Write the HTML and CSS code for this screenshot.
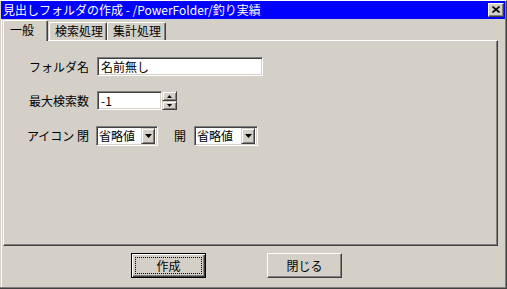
FILE: index.html
```html
<!DOCTYPE html>
<html lang="ja">
<head>
<meta charset="utf-8">
<title>見出しフォルダの作成</title>
<link rel="stylesheet" href="styles.css">
</head>
<body>
<div class="window">
  <div class="titlebar">
    <span class="title">見出しフォルダの作成 - /PowerFolder/釣り実績</span>
    <span class="close"><svg width="8" height="7" viewBox="0 0 8 7"><path d="M0.5 0.5 L7.5 6.5 M7.5 0.5 L0.5 6.5" stroke="#000" stroke-width="1.6" fill="none"/></svg></span>
  </div>
  <div class="tabs">
    <div class="tab active">一般</div>
    <div class="tab">検索処理</div>
    <div class="tab">集計処理</div>
  </div>
  <div class="panel">
    <div class="row row1">
      <span class="lbl">フォルダ名</span>
      <div class="field name">名前無し</div>
    </div>
    <div class="row row2">
      <span class="lbl">最大検索数</span>
      <div class="field num">-1</div>
      <div class="spin">
        <div class="sb up"><svg width="5" height="3" viewBox="0 0 5 3"><path d="M2.5 0 L5 3 L0 3Z" fill="#000"/></svg></div>
        <div class="sb down"><svg width="5" height="3" viewBox="0 0 5 3"><path d="M0 0 L5 0 L2.5 3Z" fill="#000"/></svg></div>
      </div>
    </div>
    <div class="row row3">
      <span class="lbl">アイコン 閉</span>
      <div class="combo c1"><span class="cval">省略値</span><span class="cbtn"><svg width="7" height="4" viewBox="0 0 7 4"><path d="M0 0 L7 0 L3.5 4Z" fill="#000"/></svg></span></div>
      <span class="lbl2">開</span>
      <div class="combo c2"><span class="cval">省略値</span><span class="cbtn"><svg width="7" height="4" viewBox="0 0 7 4"><path d="M0 0 L7 0 L3.5 4Z" fill="#000"/></svg></span></div>
    </div>
  </div>
  <div class="buttons">
    <div class="btn default"><span class="focus">作成</span></div>
    <div class="btn">閉じる</div>
  </div>
</div>
</body>
</html>
```
FILE: styles.css
```css
* { box-sizing: border-box; }
html, body { margin: 0; padding: 0; }
body {
  width: 507px;
  height: 289px;
  overflow: hidden;
  background: #d4d0c8;
  font-family: "Noto Sans CJK JP", "Liberation Sans", sans-serif;
  font-size: 12px;
  color: #000;
}
.window {
  width: 507px;
  height: 289px;
  display: flex;
  flex-direction: column;
  background: #d4d0c8;
  border-top: 1px solid #ffffff;
  border-right: 1px solid #404040;
  border-bottom: 1px solid #404040;
  box-shadow: inset -1px -1px 0 #808080, inset 1px 0 0 #d4d0c8, inset 2px 0 0 #ffffff;
}
.titlebar {
  margin: 0 1px 0 1px;
  height: 18px;
  background: #0000ff;
  display: flex;
  align-items: center;
  justify-content: space-between;
  padding: 0 1px 0 2px;
}
.title {
  color: #fff;
  font-size: 12px;
  line-height: 18px;
  white-space: nowrap;
}
.close {
  width: 16px;
  height: 14px;
  background: #d4d0c8;
  border-top: 1px solid #fff;
  border-left: 1px solid #fff;
  border-right: 1px solid #404040;
  border-bottom: 1px solid #404040;
  box-shadow: inset -1px -1px 0 #808080;
  display: flex;
  align-items: center;
  justify-content: center;
  padding: 0 1px 1px 0;
}
.close svg { display: block; }
.tabs {
  margin: 1px 0 0 3px;
  height: 20px;
  display: flex;
  align-items: flex-end;
}
.tab {
  height: 18px;
  padding: 0 4px 0 5px;
  line-height: 16px;
  background: #d4d0c8;
  border-top: 1px solid #fff;
  border-left: 1px solid #fff;
  border-right: 1px solid #404040;
  box-shadow: inset -1px 0 0 #808080;
  border-top-left-radius: 2px;
  border-top-right-radius: 2px;
  white-space: nowrap;
}
.tab:nth-child(2) { width: 58px; margin-left: 1px; }
.tab:nth-child(3) { width: 59px; margin-left: 0; }
.tab.active {
  width: 45px;
  height: 21px;
  margin-bottom: -1px;
  position: relative;
  z-index: 1;
  padding-left: 6px;
  line-height: 18px;
}
.panel {
  margin: 0 8px 0 3px;
  height: 206px;
  border-top: 1px solid #fff;
  border-left: 1px solid #fff;
  border-right: 1px solid #404040;
  border-bottom: 1px solid #404040;
  box-shadow: inset -1px -1px 0 #808080;
  padding-top: 16px;
}
.row { display: flex; align-items: center; }
.row2 { margin-top: 15px; }
.row3 { margin-top: 16px; }
.lbl {
  width: 85px;
  text-align: right;
  line-height: 16px;
  white-space: nowrap;
}
.field {
  height: 19px;
  background: #fff;
  border-top: 1px solid #808080;
  border-left: 1px solid #808080;
  border-right: 1px solid #fff;
  border-bottom: 1px solid #fff;
  box-shadow: inset 1px 1px 0 #404040, inset -1px -1px 0 #d4d0c8;
  padding-left: 3px;
  line-height: 17px;
  white-space: nowrap;
}
.field.name { margin-left: 8px; width: 166px; }
.field.num { margin-left: 8px; width: 65px; }
.spin {
  width: 15px;
  height: 19px;
  display: flex;
  flex-direction: column;
}
.sb {
  background: #d4d0c8;
  border-top: 1px solid #d4d0c8;
  border-left: 1px solid #d4d0c8;
  border-right: 1px solid #404040;
  border-bottom: 1px solid #404040;
  box-shadow: inset 1px 1px 0 #fff, inset -1px -1px 0 #808080;
  display: flex;
  align-items: center;
  justify-content: center;
}
.sb svg { display: block; }
.sb.up { height: 10px; }
.sb.down { height: 9px; }
.combo {
  height: 20px;
  background: #fff;
  border-top: 1px solid #808080;
  border-left: 1px solid #808080;
  border-right: 1px solid #fff;
  border-bottom: 1px solid #fff;
  box-shadow: inset 1px 1px 0 #404040, inset -1px -1px 0 #d4d0c8;
  display: flex;
  align-items: center;
  justify-content: space-between;
  padding: 2px 2px 2px 2px;
}
.combo.c1 { margin-left: 7px; width: 62px; }
.combo.c2 { margin-left: 8px; width: 64px; }
.cval { line-height: 16px; white-space: nowrap; }
.cbtn {
  width: 14px;
  height: 16px;
  background: #d4d0c8;
  border-top: 1px solid #d4d0c8;
  border-left: 1px solid #d4d0c8;
  border-right: 1px solid #404040;
  border-bottom: 1px solid #404040;
  box-shadow: inset 1px 1px 0 #fff, inset -1px -1px 0 #808080;
  display: flex;
  align-items: center;
  justify-content: center;
}
.cbtn svg { display: block; }
.lbl2 { margin-left: 16px; line-height: 16px; }
.buttons {
  margin-top: 7px;
  display: flex;
  padding-left: 131px;
  gap: 61px;
}
.btn {
  width: 75px;
  height: 25px;
  background: #d4d0c8;
  border-top: 1px solid #fff;
  border-left: 1px solid #fff;
  border-right: 1px solid #404040;
  border-bottom: 1px solid #404040;
  box-shadow: inset -1px -1px 0 #808080;
  display: flex;
  align-items: center;
  justify-content: center;
  line-height: 16px;
}
.btn.default {
  border: 1px solid #000;
  box-shadow: inset 1px 1px 0 #fff, inset -1px -1px 0 #404040, inset -2px -2px 0 #808080;
  padding: 3px;
}
.focus {
  flex: 1;
  align-self: stretch;
  border: 1px dotted #000;
  display: flex;
  align-items: center;
  justify-content: center;
}
```
